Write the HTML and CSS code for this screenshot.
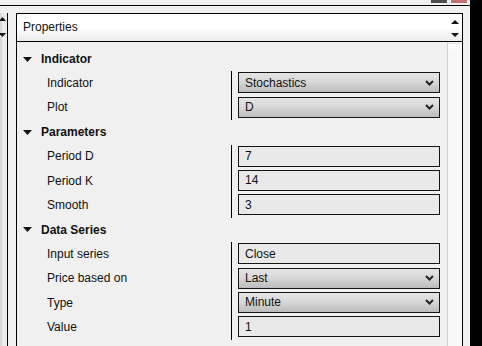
FILE: index.html
```html
<!DOCTYPE html>
<html lang="en">
<head>
  <meta charset="UTF-8" />
  <title>Properties</title>
  <link rel="stylesheet" href="styles.css">
</head>
<body>
<div class="app">
  <div class="main">
    <div class="topbar">
      <span class="tb-btn tb-min"></span>
      <span class="tb-btn tb-close"></span>
    </div>
    <div class="workspace">
      <div class="side">
        <svg class="side-arrows" width="7" height="20" viewBox="0 0 7 20">
          <polygon points="-1,4 2.5,0 6,4" fill="#111"/>
          <polygon points="-1,16 2.5,20 6,16" fill="#111"/>
        </svg>
      </div>
      <div class="props">
        <div class="props-head">
          <span>Properties</span>
          <svg class="head-arrows" width="8" height="17" viewBox="0 0 8 17">
            <polygon points="0,4 4,0 8,4" fill="#111"/>
            <polygon points="0,13 4,17 8,13" fill="#111"/>
          </svg>
        </div>
        <div class="props-body">
          <div class="grid">
            <div class="cat">
              <svg class="tri" width="9" height="5" viewBox="0 0 9 5"><polygon points="0,0 9,0 4.5,5" fill="#111"/></svg>
              Indicator
            </div>
            <div class="row">
              <div class="label">Indicator</div>
              <div class="value">
                <div class="select">Stochastics<svg class="chev" width="9" height="6" viewBox="0 0 9 6"><polyline points="1,1 4.5,4.5 8,1" fill="none" stroke="#222" stroke-width="2"/></svg></div>
              </div>
            </div>
            <div class="row">
              <div class="label">Plot</div>
              <div class="value">
                <div class="select">D<svg class="chev" width="9" height="6" viewBox="0 0 9 6"><polyline points="1,1 4.5,4.5 8,1" fill="none" stroke="#222" stroke-width="2"/></svg></div>
              </div>
            </div>

            <div class="cat">
              <svg class="tri" width="9" height="5" viewBox="0 0 9 5"><polygon points="0,0 9,0 4.5,5" fill="#111"/></svg>
              Parameters
            </div>
            <div class="row">
              <div class="label">Period D</div>
              <div class="value"><div class="field">7</div></div>
            </div>
            <div class="row">
              <div class="label">Period K</div>
              <div class="value"><div class="field">14</div></div>
            </div>
            <div class="row">
              <div class="label">Smooth</div>
              <div class="value"><div class="field">3</div></div>
            </div>

            <div class="cat">
              <svg class="tri" width="9" height="5" viewBox="0 0 9 5"><polygon points="0,0 9,0 4.5,5" fill="#111"/></svg>
              Data Series
            </div>
            <div class="row">
              <div class="label">Input series</div>
              <div class="value"><div class="field">Close</div></div>
            </div>
            <div class="row">
              <div class="label">Price based on</div>
              <div class="value">
                <div class="select">Last<svg class="chev" width="9" height="6" viewBox="0 0 9 6"><polyline points="1,1 4.5,4.5 8,1" fill="none" stroke="#222" stroke-width="2"/></svg></div>
              </div>
            </div>
            <div class="row">
              <div class="label">Type</div>
              <div class="value">
                <div class="select">Minute<svg class="chev" width="9" height="6" viewBox="0 0 9 6"><polyline points="1,1 4.5,4.5 8,1" fill="none" stroke="#222" stroke-width="2"/></svg></div>
              </div>
            </div>
            <div class="row">
              <div class="label">Value</div>
              <div class="value"><div class="field">1</div></div>
            </div>
          </div>
          <div class="scrollbar"><div class="thumb"></div></div>
        </div>
      </div>
    </div>
  </div>
  <div class="edge"></div>
</div>
</body>
</html>
```

FILE: styles.css
```css
body {
  margin: 0;
  font-family: "Liberation Sans", Arial, sans-serif;
  font-size: 12px;
  color: #111;
  background: #f0f0f0;
  overflow: hidden;
}

.app {
  display: flex;
  width: 482px;
  height: 346px;
}

.main {
  width: 470px;
  display: flex;
  flex-direction: column;
}

.edge {
  flex: 1;
  background: #000;
}

/* top window strip */
.topbar {
  height: 5px;
  border-bottom: 1px solid #000;
  display: flex;
  justify-content: flex-end;
  align-items: flex-start;
  gap: 4px;
  padding-right: 3px;
}

.tb-btn {
  height: 3px;
  width: 16px;
}

.tb-min {
  background: #4b4b4b;
}

.tb-close {
  background: #c27272;
}

.workspace {
  flex: 1;
  display: flex;
  padding-top: 7px;
  min-height: 0;
}

.side {
  width: 7px;
  border-right: 1px solid #000;
  margin-right: 8px;
  background: linear-gradient(to right, #dadada 0, #dadada 2px, #ececec 2px);
  padding-top: 4px;
}

.side-arrows {
  display: block;
}

/* properties panel */
.props {
  width: 445px;
  border: 1px solid #000;
  border-bottom: none;
  display: flex;
  flex-direction: column;
}

.props-head {
  height: 27px;
  border-bottom: 1px solid #000;
  background: linear-gradient(#ffffff 0, #ffffff 50%, #ececec 100%);
  display: flex;
  align-items: center;
  justify-content: space-between;
  padding: 0 3px 0 6px;
  line-height: 27px;
}

.head-arrows {
  display: block;
  margin-top: 1px;
}

.props-body {
  flex: 1;
  display: flex;
  min-height: 0;
}

.grid {
  width: 430px;
  padding-top: 5px;
}

.cat {
  height: 24.4px;
  display: flex;
  align-items: center;
  padding-left: 6px;
  font-weight: bold;
}

.tri {
  margin-right: 9px;
}

.row {
  height: 24.4px;
  display: flex;
}

.label {
  width: 184px;
  padding-left: 30px;
  display: flex;
  align-items: center;
  padding-bottom: 1px;
}

.value {
  border-left: 1px solid #000;
  padding-left: 6px;
  padding-top: 1px;
}

.select,
.field {
  box-sizing: border-box;
  width: 202px;
  height: 21px;
  border: 1px solid #151515;
  display: flex;
  align-items: center;
  justify-content: space-between;
  padding: 0 5px 0 6px;
}

.select {
  background: linear-gradient(#e4e4e4 0, #d8d8d8 45%, #bcbcbc 100%);
}

.field {
  background: #e9e9e9;
}

.chev {
  display: block;
}

.scrollbar {
  width: 14px;
  border-left: 1px solid #cfcfcf;
  background: #f8f8f8;
  padding-top: 1px;
}

.thumb {
  height: 8px;
  margin: 0 1px;
  border-top: 1px solid #e2e2e2;
  background: linear-gradient(#fdfdfd, #f8f8f8);
}
```
